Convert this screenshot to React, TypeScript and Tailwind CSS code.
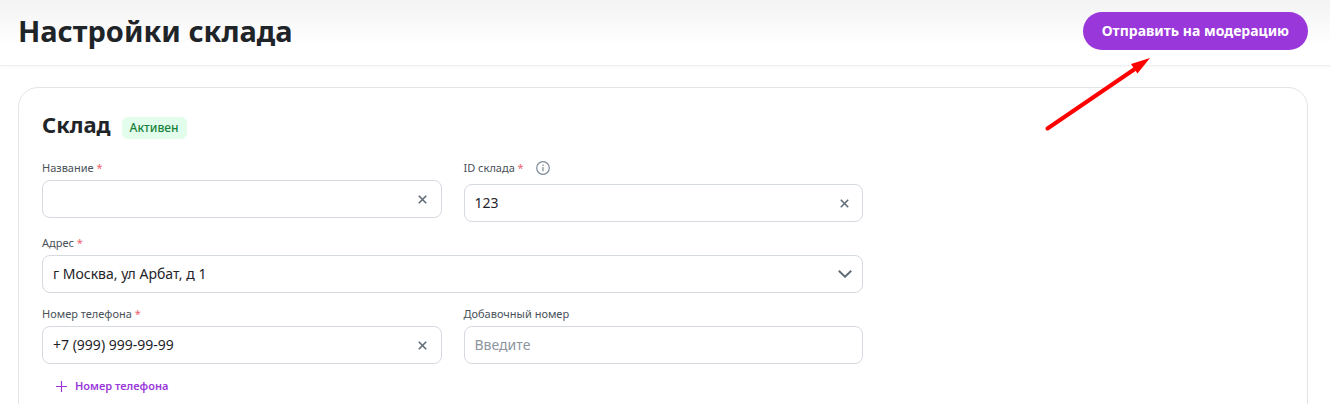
import { useState } from "react";
import type { ReactNode } from "react";

function Cross() {
  return (
    <svg viewBox="0 0 9 9" className="size-[9px]" fill="none" stroke="#5f6b76" strokeWidth="1.6" aria-hidden="true">
      <path d="M.8.8 8.2 8.2M8.2.8.8 8.2" />
    </svg>
  );
}

function Info() {
  return (
    <svg viewBox="0 0 14 14" className="size-[14px]" fill="none" stroke="#7d8a96" aria-hidden="true">
      <circle cx="7" cy="7" r="6.3" strokeWidth="1.2" />
      <path d="M7 6V10.2" strokeWidth="1.2" />
      <path d="M7 3.6V4.9" strokeWidth="1.2" />
    </svg>
  );
}

function FieldLabel({ id, text, required }: { id: string; text: string; required?: boolean }) {
  return (
    <label htmlFor={id} className="block text-[11px] leading-4 text-[#4a5159]">
      {text}
      {required && <span className="text-[#f0616d]"> *</span>}
    </label>
  );
}

type FieldProps = {
  id: string;
  label: string;
  initial?: string;
  required?: boolean;
  clearable?: boolean;
  placeholder?: string;
  hint?: ReactNode;
};

function TextField({ id, label, initial = "", required, clearable, placeholder, hint }: FieldProps) {
  const [value, setValue] = useState(initial);
  return (
    <div className="flex flex-col gap-1">
      <div className="flex items-start gap-3">
        <FieldLabel id={id} text={label} required={required} />
        {hint}
      </div>
      <div className="flex h-[38px] items-center rounded-lg border border-[#d5d9e0] bg-white pr-3 pl-[10px]">
        <input
          id={id}
          value={value}
          placeholder={placeholder}
          onChange={(e) => setValue(e.target.value)}
          className="min-w-0 flex-1 bg-transparent text-sm text-[#1f2429] outline-none placeholder:text-[#8d959e]"
        />
        {clearable && (
          <button type="button" aria-label="Очистить" onClick={() => setValue("")} className="flex size-3 items-center justify-center">
            <Cross />
          </button>
        )}
      </div>
    </div>
  );
}

export default function App() {
  return (
    <div className="bg-white font-['Noto_Sans',sans-serif] text-[#1f2429]">
      <header className="flex items-center justify-between border-b border-[#efefef] bg-linear-to-b from-[#f3f3f3] to-white to-70% pt-3 pr-[22px] pb-[15px] pl-[18px] shadow-[0_1px_2px_rgba(0,0,0,0.04)]">
        <h1 className="text-[29px] leading-[38px] font-bold">Настройки склада</h1>
        <div className="relative">
          <button type="button" className="h-[38px] rounded-full bg-[#9a37da] px-[19px] text-sm font-bold text-white">
            Отправить на модерацию
          </button>
          <svg
            viewBox="0 0 108 76"
            className="pointer-events-none absolute top-[44px] right-[157px] h-[76px] w-[108px]"
            aria-hidden="true"
          >
            <path d="M4.5 72.5 94 11.5" stroke="#ff0000" strokeWidth="4" strokeLinecap="round" />
            <path d="M107 2 88 8 91 12.5 94.5 17.5Z" fill="#ff0000" />
          </svg>
        </div>
      </header>

      <main className="pt-[21px] pr-[22px] pb-6 pl-[18px]">
        <section className="rounded-[20px] border border-[#e3e4e6] px-[23px] pt-5 pb-6">
          <div className="flex items-center gap-[11px]">
            <h2 className="text-[22px] leading-8 font-bold">Склад</h2>
            <span className="mt-2 rounded-md bg-[#e3fdec] px-2 py-[3px] text-xs font-medium text-[#17813c]">Активен</span>
          </div>

          <form className="mt-5 grid max-w-[821px] grid-cols-2 gap-x-[22px] gap-y-[13px]">
            <TextField id="name" label="Название" required clearable />
            <TextField
              id="warehouse-id"
              label="ID склада"
              initial="123"
              required
              clearable
              hint={
                <button type="button" aria-label="Подсказка" className="h-5 pt-px pb-[5px]">
                  <Info />
                </button>
              }
            />
            <div className="col-span-2 flex flex-col gap-1">
              <FieldLabel id="address" text="Адрес" required />
              <div className="grid items-center">
                <select
                  id="address"
                  className="col-start-1 row-start-1 h-[38px] w-full appearance-none rounded-lg border border-[#d5d9e0] bg-white pr-8 pl-[10px] text-sm text-[#1f2429] outline-none"
                >
                  <option>г Москва, ул Арбат, д 1</option>
                </select>
                <svg
                  viewBox="0 0 14 8"
                  className="pointer-events-none col-start-1 row-start-1 mr-[11px] h-2 w-[14px] justify-self-end"
                  fill="none"
                  stroke="#5f6b76"
                  strokeWidth="1.9"
                  aria-hidden="true"
                >
                  <path d="M.8.8 7 6.8 13.2.8" />
                </svg>
              </div>
            </div>
            <TextField id="phone" label="Номер телефона" initial="+7 (999) 999-99-99" required clearable />
            <TextField id="extension" label="Добавочный номер" placeholder="Введите" />
          </form>

          <button type="button" className="mt-3 ml-[14px] flex items-center gap-2 text-[11px] leading-5 font-semibold text-[#9a37da]">
            <svg viewBox="0 0 11 11" className="size-[11px]" stroke="#9a37da" strokeWidth="1.2" aria-hidden="true">
              <path d="M5.5 0V11M0 5.5H11" />
            </svg>
            Номер телефона
          </button>
        </section>
      </main>
    </div>
  );
}
